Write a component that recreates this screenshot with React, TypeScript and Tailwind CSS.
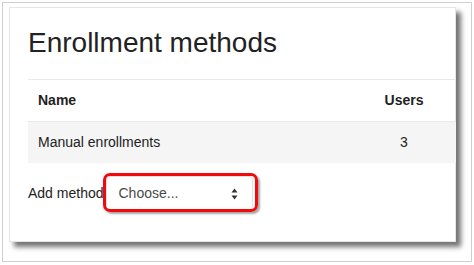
import React from "react";

export default function App() {
  return (
    <div
      className="w-[474px] h-[265px] bg-white p-[2px]"
      style={{ fontFamily: '"Liberation Sans", Arial, sans-serif' }}
    >
      <div className="w-[470px] h-[260px] border border-[#cfcfcf] pl-[6px] pt-[4px]">
        <div className="w-[447px] h-[235px] border border-[#e6e6e6] bg-white shadow-[5px_5px_5px_rgba(0,0,0,0.55)] pl-[18px] pt-[18px]">
          <h1 className="text-[28px] leading-[34px] text-[#222] font-normal">
            Enrollment methods
          </h1>
          <div className="mt-[19px] mr-[-1px] text-[14px] text-[#222]">
            <div className="grid grid-cols-[1fr_80px] h-[43px] items-center border-t border-b border-[#e9e9e9] pr-[12px]">
              <div className="pl-[10px] font-bold">Name</div>
              <div className="text-center font-bold">Users</div>
            </div>
            <div className="grid grid-cols-[1fr_80px] h-[41px] items-center bg-[#f5f5f5] pr-[12px]">
              <div className="pl-[10px]">Manual enrollments</div>
              <div className="text-center">3</div>
            </div>
          </div>
          <div className="mt-[13px] flex items-center h-[35px] text-[14px] text-[#222]">
            <span>Add method</span>
            <div className="relative ml-[2px] w-[147px] h-[35px] border border-[#e2e2e2] rounded-[4px] bg-white flex items-center pl-[12px] text-[#4a4a4a]">
              <span>Choose...</span>
              <svg
                className="absolute right-[14px] top-[11px]"
                width="7"
                height="12"
                viewBox="0 0 7 12"
              >
                <path d="M3.5 0.5 L6.5 4.5 L0.5 4.5 Z" fill="#333" />
                <path d="M3.5 11.5 L6.5 7.5 L0.5 7.5 Z" fill="#333" />
              </svg>
              <div className="absolute left-[-4px] right-[-6px] top-[-4px] bottom-[-2px] border-[3px] border-[#f20a0a] rounded-[7px] shadow-[2px_2px_2px_rgba(0,0,0,0.35)]" />
            </div>
          </div>
        </div>
      </div>
    </div>
  );
}
